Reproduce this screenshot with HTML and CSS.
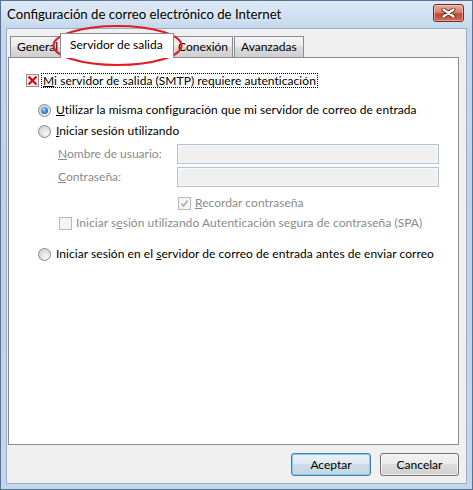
FILE: index.html
```html
<!DOCTYPE html>
<html lang="es">
<head>
<meta charset="utf-8">
<title>Configuración de correo electrónico de Internet</title>
<link rel="stylesheet" href="styles.css">
</head>
<body>
<div class="window">
  <div class="titlebar">
    <span class="title">Configuración de correo electrónico de Internet</span>
    <div class="close">
      <svg width="15" height="10" viewBox="0 0 15 10">
        <path d="M2.5 1.5 L12.5 8.5 M12.5 1.5 L2.5 8.5" stroke="#5a2a24" stroke-width="4" stroke-linecap="round"/>
        <path d="M2.5 1.5 L12.5 8.5 M12.5 1.5 L2.5 8.5" stroke="#ffffff" stroke-width="2.2" stroke-linecap="round"/>
      </svg>
    </div>
  </div>
  <div class="client">
    <div class="tabs">
      <div class="tab tab-general">General</div>
      <div class="tab tab-active">Servidor de salida</div>
      <div class="tab tab-conexion">Conexión</div>
      <div class="tab tab-avanzadas">Avanzadas</div>
    </div>
    <div class="panel">
      <div class="row row-auth">
        <span class="check check-x">
          <svg width="11" height="11" viewBox="0 0 11 11">
            <path d="M2.3 2.3 L8.7 8.7 M8.7 2.3 L2.3 8.7" stroke="#e3000f" stroke-width="2.3" stroke-linecap="square"/>
          </svg>
        </span>
        <span class="focus"><u>M</u>i servidor de salida (SMTP) requiere autenticación</span>
      </div>
      <div class="row row-radio1">
        <span class="radio radio-on"></span>
        <span class="text"><u>U</u>tilizar la misma configuración que mi servidor de correo de entrada</span>
      </div>
      <div class="row row-radio2">
        <span class="radio"></span>
        <span class="text"><u>I</u>niciar sesión utilizando</span>
      </div>
      <div class="row row-field">
        <span class="label disabled"><u>N</u>ombre de usuario:</span>
        <span class="input"></span>
      </div>
      <div class="row row-field row-field2">
        <span class="label disabled"><u>C</u>ontraseña:</span>
        <span class="input"></span>
      </div>
      <div class="row row-remember">
        <span class="check check-disabled">
          <svg width="11" height="11" viewBox="0 0 11 11">
            <path d="M2.5 5.5 L4.5 8 L8.5 2.5" fill="none" stroke="#a8a8a8" stroke-width="1.4"/>
          </svg>
        </span>
        <span class="text disabled"><u>R</u>ecordar contraseña</span>
      </div>
      <div class="row row-spa">
        <span class="check check-disabled"></span>
        <span class="text disabled">Iniciar s<u>e</u>sión utilizando Autenticación segura de contraseña (SPA)</span>
      </div>
      <div class="row row-radio3">
        <span class="radio"></span>
        <span class="text">Iniciar sesión en el <u>s</u>ervidor de correo de entrada antes de enviar correo</span>
      </div>
    </div>
    <div class="buttons">
      <div class="button button-default">Aceptar</div>
      <div class="button">Cancelar</div>
    </div>
  </div>
  <svg class="annotation" width="473" height="490" viewBox="0 0 473 490">
    <ellipse cx="117.5" cy="45.5" rx="64" ry="19.5" fill="none" stroke="#e51b24" stroke-width="2.2"/>
  </svg>
</div>
</body>
</html>
```

FILE: styles.css
```css
html, body {
  margin: 0;
  padding: 0;
  background: #ffffff;
}

body {
  font-family: "Lato", "Liberation Sans", sans-serif;
  font-size: 12px;
  color: #000000;
}

.window {
  position: relative;
  width: 473px;
  height: 490px;
  box-sizing: border-box;
  border: 1px solid #5a7190;
  background: linear-gradient(#dce8f5 0px, #d1e1f1 14px, #c4d7ec 28px, #bed3ea 200px, #c2d6ec 490px);
  padding: 0 5px 5px 5px;
  display: flex;
  flex-direction: column;
}

.titlebar {
  height: 27px;
  display: flex;
  justify-content: space-between;
  align-items: flex-start;
}

.title {
  font-size: 13.2px;
  line-height: 27px;
  padding-left: 1px;
  color: #000000;
  text-shadow: 0 0 6px rgba(255, 255, 255, 0.9);
}

.close {
  margin-top: 3px;
  margin-right: 3px;
  width: 31px;
  height: 18px;
  box-sizing: border-box;
  border: 1px solid #6c2f28;
  border-radius: 3px;
  background: linear-gradient(#e9aa9f 0%, #d9816f 45%, #c14a35 55%, #cf6a55 100%);
  box-shadow: inset 0 0 0 1px rgba(255, 220, 210, 0.5);
  display: flex;
  align-items: center;
  justify-content: center;
}

.client {
  flex: 1;
  border: 1px solid #9aafc6;
  background: #f0f0f0;
  display: flex;
  flex-direction: column;
  padding: 0 7px 0 1px;
}

.tabs {
  margin-top: 4px;
  height: 24px;
  display: flex;
  align-items: flex-end;
  padding-left: 2px;
}

.tab {
  box-sizing: border-box;
  height: 21px;
  border: 1px solid #898c95;
  border-bottom: none;
  background: linear-gradient(#f3f3f3, #ebebeb 50%, #dddddd 50%, #cfcfcf);
  padding-left: 6px;
  line-height: 19px;
  white-space: nowrap;
  overflow: hidden;
}

.tab-general {
  width: 52px;
}

.tab-active {
  position: relative;
  z-index: 1;
  width: 114px;
  height: 25px;
  margin: 0 -2px -1px -2px;
  background: #ffffff;
  padding-left: 9px;
  line-height: 21px;
}

.tab-conexion {
  width: 61px;
  padding-left: 5px;
}

.tab-avanzadas {
  width: 70px;
  margin-left: 1px;
}

.panel {
  flex: 1;
  border: 1px solid #898c95;
  background: #ffffff;
  display: flex;
  flex-direction: column;
}

.row {
  height: 16px;
  display: flex;
  align-items: center;
  white-space: nowrap;
}

.row-auth {
  margin-top: 14px;
  padding-left: 17px;
}

.row-radio1 {
  margin-top: 14px;
  padding-left: 29px;
}

.row-radio2 {
  margin-top: 5px;
  padding-left: 29px;
}

.row-field {
  height: 20px;
  margin-top: 5px;
  padding-left: 49px;
}

.row-field2 {
  margin-top: 3px;
}

.row-remember {
  margin-top: 8px;
  padding-left: 169px;
}

.row-spa {
  margin-top: 4px;
  padding-left: 50px;
}

.row-radio3 {
  margin-top: 15px;
  padding-left: 29px;
}

.text,
.focus {
  letter-spacing: 0.05px;
}

.check {
  flex: none;
  width: 13px;
  height: 13px;
  box-sizing: border-box;
  border: 1px solid #8e8f8f;
  background: linear-gradient(135deg, #dcdcdc, #ffffff);
  box-shadow: inset 0 0 0 1px #f4f4f4;
  display: flex;
  align-items: center;
  justify-content: center;
  margin-right: 3px;
}

.check-x {
  background: #ffffff;
  border-color: #8f8f8f;
  margin-right: 2px;
}

.check-disabled {
  border-color: #b9b9b9;
  background: #f4f4f4;
  box-shadow: none;
  margin-right: 4px;
}

.focus {
  border: 1px dotted #000000;
  padding: 0 1px;
  line-height: 13px;
}

.radio {
  flex: none;
  width: 13px;
  height: 13px;
  box-sizing: border-box;
  border-radius: 50%;
  border: 1px solid #8b8b8b;
  background: radial-gradient(circle at 65% 70%, #f6f6f6 0%, #dadada 60%, #c9c9c9 100%);
  margin-right: 5px;
  display: flex;
  align-items: center;
  justify-content: center;
}

.radio-on::after {
  content: "";
  width: 7px;
  height: 7px;
  border-radius: 50%;
  background: radial-gradient(circle at 40% 35%, #a9dcff 0%, #3f8fd8 45%, #174f96 100%);
}

.text {
  line-height: 16px;
}

.label {
  width: 119px;
  line-height: 20px;
}

.disabled {
  color: #8a8a8a;
}

.input {
  width: 262px;
  height: 20px;
  box-sizing: border-box;
  border: 1px solid #b1c4d8;
  background: #f0f0f0;
  box-shadow: inset 0 0 0 1px #f6f6f6;
}

.buttons {
  margin-top: 8px;
  margin-bottom: 7px;
  display: flex;
  justify-content: flex-end;
  gap: 9px;
}

.button {
  width: 79px;
  height: 23px;
  box-sizing: border-box;
  border: 1px solid #707070;
  border-radius: 3px;
  background: linear-gradient(#f2f2f2 0%, #ebebeb 50%, #dddddd 50%, #cfcfcf 100%);
  box-shadow: inset 0 0 0 1px rgba(255, 255, 255, 0.7);
  display: flex;
  align-items: center;
  justify-content: center;
}

.button-default {
  width: 80px;
  border-color: #3c7fb1;
  background: linear-gradient(#eaf1f6 0%, #dfe9f1 50%, #cfdde8 50%, #c5d5e2 100%);
  box-shadow: inset 0 0 0 1px #7fd0f4;
}

.annotation {
  position: absolute;
  left: -1px;
  top: -1px;
  pointer-events: none;
}
```
